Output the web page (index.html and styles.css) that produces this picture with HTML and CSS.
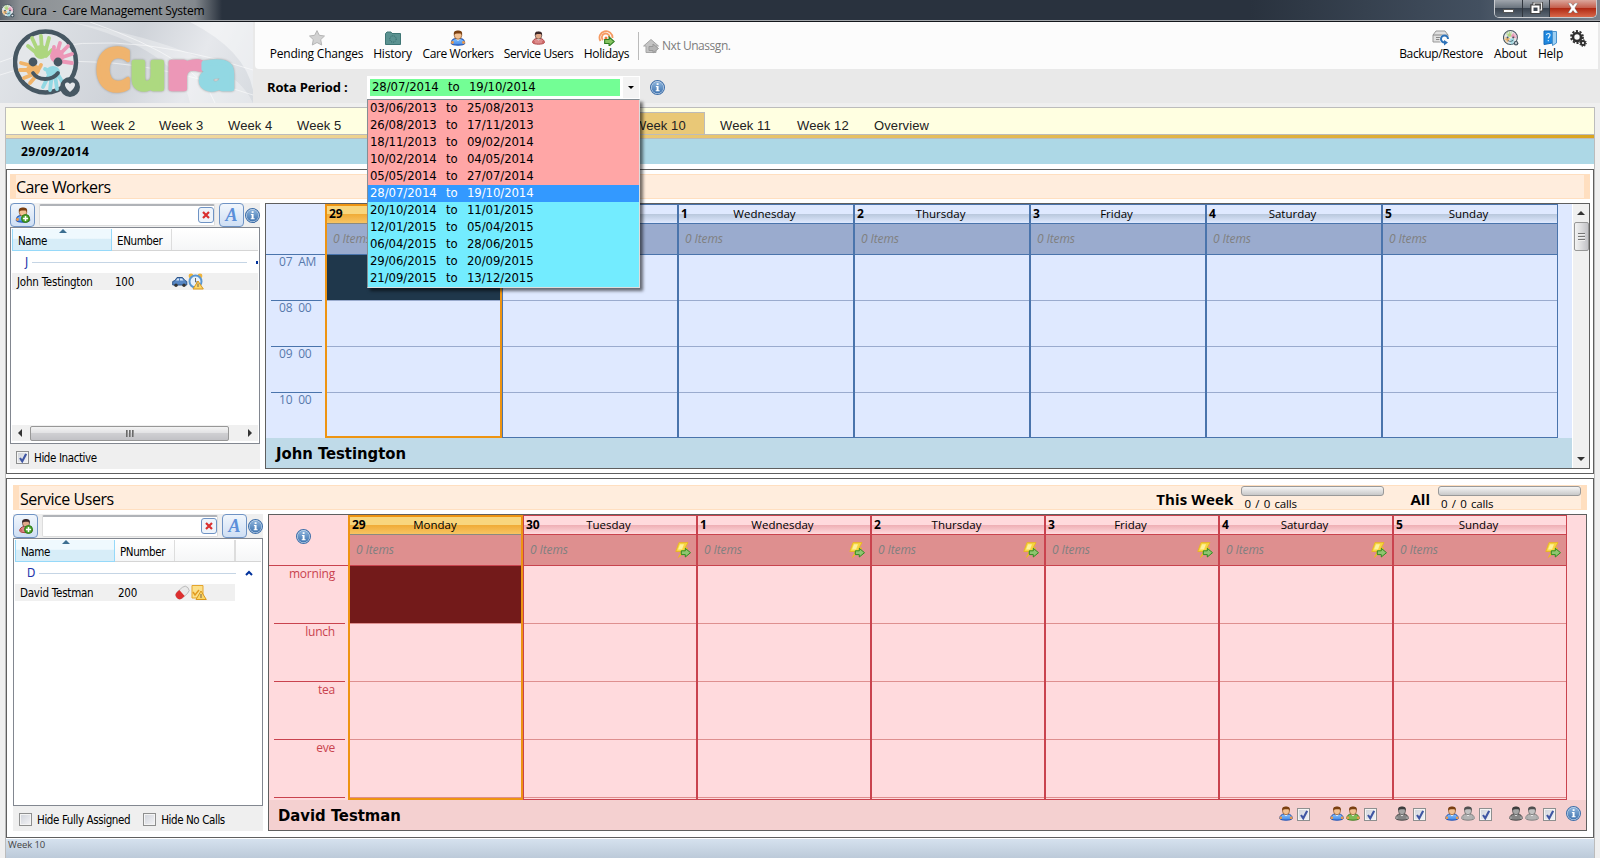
FILE: index.html
```html
<!DOCTYPE html>
<html lang="en">
<head>
<meta charset="utf-8">
<title>Cura - Care Management System</title>
<link rel="stylesheet" href="styles.css">
</head>
<body>
<svg width="0" height="0" class="defs">
<defs>
<linearGradient id="gInfo" x1="0" y1="0" x2="0" y2="1"><stop offset="0" stop-color="#8db4dc"/><stop offset="1" stop-color="#3f74b0"/></linearGradient>
<linearGradient id="gBlue" x1="0" y1="0" x2="0" y2="1"><stop offset="0" stop-color="#8cc4fa"/><stop offset="1" stop-color="#3f86e8"/></linearGradient>
<symbol id="info" viewBox="0 0 14 14"><circle cx="7" cy="7" r="6.500" fill="#dde9f5" stroke="#3e6ea8"/><circle cx="7" cy="7" r="5.500" fill="url(#gInfo)"/><rect x="6.200" y="3" width="1.800" height="1.600" fill="#fff"/><path d="M5.500 5.500H8V9.500H9V10.600H5.300V9.500H6.200V6.500H5.500Z" fill="#fff"/></symbol>
<symbol id="man" viewBox="0 0 14 15"><path d="M.7 12.600C.6 9.600 3 8.200 5 8H9c2 .2 4.400 1.600 4.300 4.600C12 14.700 2 14.700.7 12.600Z" fill="var(--body)" stroke="var(--edge)"/><circle cx="1.800" cy="11.800" r="1.400" fill="var(--hand)"/><circle cx="12.200" cy="11.800" r="1.400" fill="var(--hand)"/><path d="M5 8.200H9L7 10.200Z" fill="#fff"/><ellipse cx="7" cy="5" rx="3.500" ry="3.700" fill="var(--skin)" stroke="var(--hair)" stroke-width=".6"/><path d="M3.200 5C2.500 1 4.600.4 7 .4S11.500 1 10.800 5L9.800 3.200H6L3.800 3.800Z" fill="var(--hair)"/></symbol>
<symbol id="plus" viewBox="0 0 9 9"><circle cx="4.500" cy="4.500" r="4" fill="#4fa52e" stroke="#2c7a17"/><path d="M4.500 2V7M2 4.500H7" stroke="#fff" stroke-width="1.500"/></symbol>
<symbol id="arrow" viewBox="0 0 10 10"><path d="M.6 3.200H4.600V.8L9.300 5 4.600 9.200V6.800H.6Z" fill="#86c463" stroke="#2e7d21"/></symbol>
<symbol id="bolt" viewBox="0 0 16 16"><path d="M4 .6H13L10 6H13L3.500 15.400 6.500 9.500H.8Z" fill="#f7d640" stroke="#e8b624" stroke-width=".9"/><path d="M5 2.300H9L7 7.500H3Z" fill="#fdf19a"/><path d="M6.300 8.800H10.300V6.300L15.500 10.700 10.300 15V12.600H6.300Z" fill="#8fc56f" stroke="#2e8d21"/></symbol>
<symbol id="chk" viewBox="0 0 7 9"><path d="M.8 4.500L2.800 7.500 6.300.8" fill="none" stroke="#3f56a3" stroke-width="1.900"/></symbol>
<symbol id="face" viewBox="0 0 70 70">
<circle cx="32.500" cy="33" r="30.500" fill="#e4e7ea" stroke="#465762" stroke-width="4.500"/>
<g stroke-linecap="round" stroke-width="3.800" fill="none">
<path stroke="#add67f" d="M26 26L15 17M26 24L19 9M29 23L28 7M32 24L36 9M33 27L39 21"/><ellipse cx="28" cy="23" rx="7" ry="7" fill="#add67f"/>
<path stroke="#ec97b7" d="M43 27L47 14M46 26L55 17M47 29L59 25M46 32L59 34M40 27L41 18"/><ellipse cx="44" cy="27" rx="7" ry="7" fill="#ec97b7"/>
<path stroke="#f0b46a" d="M20 37L8 34M20 41L7 41M21 45L11 49M23 47L17 54M24 43L28 36"/><ellipse cx="20" cy="41" rx="7" ry="6" fill="#f0b46a"/>
<path stroke="#92d8e3" d="M37 44L30 58M39 45L37 61M42 46L44 60M44 44L51 56M36 42L32 40"/><ellipse cx="40" cy="43" rx="7" ry="6" fill="#92d8e3"/></g>
<circle cx="20" cy="33" r="4.400" fill="#465762"/><circle cx="45" cy="33" r="4.400" fill="#465762"/>
<path d="M20 44C25 52 39 52 45 44" stroke="#465762" stroke-width="3.800" fill="none" stroke-linecap="round"/>
<circle cx="57" cy="58" r="10" fill="#465762"/><path d="M57 63C48 56 53 51 57 55 61 51 66 56 57 63Z" fill="#e4e7ea"/></symbol>
</defs></svg>

<div class="titlebar"><svg class="ticon"><use href="#face"/></svg><span class="ttext">Cura&nbsp; -&nbsp; Care Management System</span>
<div class="winbtns"><i class="wb min"><b></b></i><i class="wb max"><svg width="13" height="12" viewBox="0 0 13 12"><path d="M4 3V1H11.500V8H9.500" fill="none" stroke="#444" stroke-width="3"/><path d="M2 4H9V10.500H2Z" fill="none" stroke="#444" stroke-width="3.500"/><path d="M4 3V1H11.500V8H9.500" fill="none" stroke="#eee" stroke-width="1.200"/><path d="M2.500 4.500H8.500V10H2.500Z" fill="none" stroke="#fff" stroke-width="2"/></svg></i><i class="wb close"><svg width="12" height="10" viewBox="0 0 12 10"><path d="M1 0H4L6 2.500 8 0H11L7.800 5 11 10H8L6 7.500 4 10H1L4.200 5Z" fill="#fff" stroke="#555" stroke-width=".4"/></svg></i></div></div>

<header class="head">
<div class="brand"><svg width="253" height="81" viewBox="0 22 253 81">
<path d="M70 22Q230 50 253 103H190Q180 50 70 22Z" fill="#fff" opacity=".3"/><path d="M190 22Q245 50 253 90V22Z" fill="#fff" opacity=".45"/><path d="M0 62Q100 20 253 70M0 75Q90 40 253 95M90 22Q200 60 215 103" stroke="#fff" fill="none" opacity=".55"/>
<use href="#face" x="13" y="29" width="70" height="70"/>
<g class="word"><text x="96" y="88.500" font-size="55" textLength="35" lengthAdjust="spacingAndGlyphs" fill="#f0b46e" stroke="#f0b46e">C</text><text x="130" y="88.500" font-size="49" textLength="36" lengthAdjust="spacingAndGlyphs" fill="#add980" stroke="#add980">u</text><text x="166" y="88.500" font-size="49" textLength="34" lengthAdjust="spacingAndGlyphs" fill="#ec97b7" stroke="#ec97b7">r</text><text x="199" y="88.500" font-size="49" textLength="37" lengthAdjust="spacingAndGlyphs" fill="#92d8e3" stroke="#92d8e3">a</text></g></svg></div>
<div class="headmain">
<nav class="tools">
<a class="tool t1"><svg width="16" height="16"><path d="M8 .6L10.300 5.300 15.500 6 11.700 9.600 12.700 15 8 12.500 3.300 15 4.300 9.600.5 6 5.700 5.300Z" fill="#d2d2d2" stroke="#b5b5b5"/></svg><span>Pending Changes</span></a>
<a class="tool t2"><svg width="16" height="16"><path d="M.5 3.500L2 2H6L7 3.500H15.500V14.500H.5Z" fill="#5b9291" stroke="#3f7675"/><circle cx="8" cy="9" r="3.200" fill="none" stroke="#2f6667" stroke-dasharray="1 1"/></svg><span>History</span></a>
<a class="tool t3"><svg width="16" height="16" class="blue"><use href="#man"/></svg><span>Care Workers</span></a>
<a class="tool t4"><svg width="13" height="15" class="red"><use href="#man"/></svg><span>Service Users</span></a>
<a class="tool t5"><svg width="18" height="17"><path d="M2.500 11A6.500 6.500 0 1 1 14.500 8M5 10A3.800 3.800 0 1 1 11.500 7" fill="none" stroke="#f59a62" stroke-width="1.800"/><circle cx="8" cy="8" r="1.500" fill="#ef7d3c"/><use href="#arrow" x="6" y="6" width="11" height="11"/></svg><span>Holidays</span></a>
<i class="sep"></i>
<a class="nxt"><svg width="17" height="16"><path d="M.6 8L8 1.500 15.500 8H13V14.500H3V8Z" fill="#c4c4c4" stroke="#a5a5a5"/><path d="M6 8.500H10V6L15.500 10.500 10 15V12.500H6Z" fill="#b4b4b4" stroke="#999"/></svg><span>Nxt Unassgn.</span></a>
<a class="tool t6"><svg width="18" height="16"><path d="M1 5L4 1H13L16 5V12H1Z" fill="#e0e0e0" stroke="#999"/><path d="M1 5H16M4 7.500H10M4 9.500H9" stroke="#888" fill="none"/><circle cx="12.500" cy="9.500" r="5" fill="#fcfcfc"/><path d="M16 9A3.500 3.500 0 1 0 12.500 12.500" stroke="#2e72b8" stroke-width="2" fill="none"/><path d="M12 10V15.500L16 12.500Z" fill="#2e72b8"/></svg><span>Backup/Restore</span></a>
<a class="tool t7"><svg width="16" height="16"><use href="#face"/></svg><span>About</span></a>
<a class="tool t8"><svg width="15" height="16"><path d="M1 1H9.500V13L1 14.500Z" fill="#2089e0" stroke="#1268b8"/><path d="M9.500 1.500H13.500V13L9.500 15.500Z" fill="#9fd0f3" stroke="#4c94cc"/><path d="M3.500 5C3.500 3 7.300 3 7 5.200 6.800 6.800 5.300 6.800 5.300 8.500M5.300 10V11.200" fill="none" stroke="#d9f0ff" stroke-width="1.200"/></svg><span>Help</span></a>
<a class="gear"><svg width="17" height="17" fill="none" stroke="#303030"><circle cx="7" cy="7" r="4" stroke-width="2.600"/><circle cx="7" cy="7" r="6" stroke-width="1.800" stroke-dasharray="2.200 1.570"/><circle cx="13" cy="13" r="2" stroke-width="1.800"/><circle cx="13" cy="13" r="3.200" stroke-width="1.200" stroke-dasharray="1.200 1.300"/></svg></a>
</nav>
<div class="rota"><b>Rota Period :</b>
<div class="combo"><div class="field">28/07/2014 &nbsp; to &nbsp; 19/10/2014</div><i class="caret"></i>
<ul class="drop"><li class="r">03/06/2013 &nbsp; to &nbsp; 25/08/2013</li><li class="r">26/08/2013 &nbsp; to &nbsp; 17/11/2013</li><li class="r">18/11/2013 &nbsp; to &nbsp; 09/02/2014</li><li class="r">10/02/2014 &nbsp; to &nbsp; 04/05/2014</li><li class="r">05/05/2014 &nbsp; to &nbsp; 27/07/2014</li><li class="s">28/07/2014 &nbsp; to &nbsp; 19/10/2014</li><li>20/10/2014 &nbsp; to &nbsp; 11/01/2015</li><li>12/01/2015 &nbsp; to &nbsp; 05/04/2015</li><li>06/04/2015 &nbsp; to &nbsp; 28/06/2015</li><li>29/06/2015 &nbsp; to &nbsp; 20/09/2015</li><li>21/09/2015 &nbsp; to &nbsp; 13/12/2015</li></ul></div>
<svg class="info"><use href="#info"/></svg></div>
</div>
</header>

<main class="frame">
<nav class="tabs"><a>Week 1</a><a>Week 2</a><a>Week 3</a><a>Week 4</a><a>Week 5</a><a class="gap"></a><a class="on">Week 10</a><a class="w">Week 11</a><a class="w">Week 12</a><a class="w">Overview</a></nav>
<div class="gold"></div>
<div class="date">29/09/2014</div>

<section class="panel care">
<h2 class="ptitle"><span>Care Workers</span></h2>
<div class="cols">
<aside class="side">
<div class="sbar"><button class="btn"><svg width="16" height="16" class="blue"><use href="#man"/></svg><svg class="pl"><use href="#plus"/></svg></button><div class="search"><button class="clr"><svg width="8" height="8"><path d="M1 1L7 7M7 1L1 7" stroke="#d93030" stroke-width="2.200"/></svg></button></div><button class="btn a">A</button><svg class="info"><use href="#info"/></svg></div>
<div class="list">
<div class="lh"><span class="n">Name<i></i></span><span class="e">ENumber</span><span class="z"></span></div>
<div class="grp"><span>J</span><hr><i class="dot"></i></div>
<div class="row"><span class="c1">John Testington</span><span class="c2">100</span><svg width="32" height="17"><path d="M.7 8.500L3 7.500 5 4.500H10.500L13 7.500 14.800 8.500V12H.7Z" fill="#5686c4" stroke="#2d5488"/><path d="M4 7.500L5.500 5.500H7V7.500ZM8 5.500H10L11.500 7.500H8Z" fill="#d5e6f7"/><circle cx="4" cy="12.300" r="1.700" fill="#333"/><circle cx="12" cy="12.300" r="1.700" fill="#333"/><circle cx="19" cy="3" r="2.400" fill="#f0b43c"/><circle cx="28" cy="3" r="2.400" fill="#f0b43c"/><circle cx="23.500" cy="8.500" r="6" fill="#e6f1fb" stroke="#5a96d0" stroke-width="2"/><path d="M23.500 5V9H26" stroke="#666" fill="none"/><path d="M26 8L31.300 16H21Z" fill="#fbd667" stroke="#d9971c"/><path d="M26 10.500V14" stroke="#765"/></svg></div>
<div class="hs"><i class="la"></i><div class="thumb"><i></i><i></i><i></i></div><i class="ra"></i></div>
</div>
<div class="opts"><label><span class="cb"><svg width="8" height="10"><use href="#chk"/></svg></span>Hide Inactive</label></div>
</aside>
<div class="cal">
<div class="calbody">
<div class="times"><div class="t0"></div><div class="tm">07&nbsp; AM</div><div class="tm">08&nbsp; 00</div><div class="tm">09&nbsp; 00</div><div class="tm">10&nbsp; 00</div></div>
<div class="day today"><div class="dh"><b>29</b></div><div class="it">0 Items</div><div class="sl dark"></div><div class="sl"></div><div class="sl"></div><div class="sl"></div></div>
<div class="day tue"><div class="dh"></div><div class="it"></div><div class="sl"></div><div class="sl"></div><div class="sl"></div><div class="sl"></div></div>
<div class="day"><div class="dh"><b>1</b><span>Wednesday</span></div><div class="it">0 Items</div><div class="sl"></div><div class="sl"></div><div class="sl"></div><div class="sl"></div></div>
<div class="day"><div class="dh"><b>2</b><span>Thursday</span></div><div class="it">0 Items</div><div class="sl"></div><div class="sl"></div><div class="sl"></div><div class="sl"></div></div>
<div class="day"><div class="dh"><b>3</b><span>Friday</span></div><div class="it">0 Items</div><div class="sl"></div><div class="sl"></div><div class="sl"></div><div class="sl"></div></div>
<div class="day"><div class="dh"><b>4</b><span>Saturday</span></div><div class="it">0 Items</div><div class="sl"></div><div class="sl"></div><div class="sl"></div><div class="sl"></div></div>
<div class="day last"><div class="dh"><b>5</b><span>Sunday</span></div><div class="it">0 Items</div><div class="sl"></div><div class="sl"></div><div class="sl"></div><div class="sl"></div></div>
</div>
<div class="foot"><span>John Testington</span></div>
<div class="vs"><i class="ua"></i><div class="vth"><i></i><i></i><i></i></div><i class="da"></i></div>
</div>
</div>
</section>

<section class="panel users">
<h2 class="ptitle"><span>Service Users</span><b class="tw">This Week</b><div class="prog"><i></i><em>0 / 0 calls</em></div><b class="al">All</b><div class="prog"><i></i><em>0 / 0 calls</em></div></h2>
<div class="cols">
<aside class="side">
<div class="sbar"><button class="btn"><svg width="14" height="16" class="red"><use href="#man"/></svg><svg class="pl"><use href="#plus"/></svg></button><div class="search"><button class="clr"><svg width="8" height="8"><path d="M1 1L7 7M7 1L1 7" stroke="#d93030" stroke-width="2.200"/></svg></button></div><button class="btn a">A</button><svg class="info"><use href="#info"/></svg></div>
<div class="list">
<div class="lh"><span class="n">Name<i></i></span><span class="e">PNumber</span><span class="z y"></span><span class="z"></span></div>
<div class="grp"><span>D</span><hr><svg width="8" height="6"><path d="M1 5L4 2 7 5" fill="none" stroke="#00319c" stroke-width="2"/></svg></div>
<div class="row"><span class="c1">David Testman</span><span class="c2">200</span><svg width="32" height="17"><g transform="rotate(-42 7 9)"><rect x="0" y="5" width="15" height="8" rx="4" fill="#e9e9e9" stroke="#aaa" stroke-width=".7"/><path d="M7 5H4A4 4 0 0 0 4 13H7Z" fill="#dc3030"/></g><path d="M17 1.500H28V14H17Z" fill="#fce08a" stroke="#e5a52c"/><path d="M18 8L20 11 24 6" fill="none" stroke="#e19a20" stroke-width="1.500"/><path d="M26 7L31.300 15.500H21Z" fill="#fbd667" stroke="#d9971c"/><path d="M26 10V14" stroke="#765"/></svg></div>
</div>
<div class="opts"><label><span class="cb"></span>Hide Fully Assigned</label><label class="l2"><span class="cb"></span>Hide No Calls</label></div>
</aside>
<div class="cal">
<div class="calbody">
<div class="times"><div class="t0"><svg class="info"><use href="#info"/></svg></div><div class="tm">morning</div><div class="tm">lunch</div><div class="tm">tea</div><div class="tm">eve</div></div>
<div class="day today"><div class="dh"><b>29</b><span>Monday</span></div><div class="it">0 Items</div><div class="sl dark"></div><div class="sl"></div><div class="sl"></div><div class="sl"></div></div>
<div class="day tue"><div class="dh"><b>30</b><span>Tuesday</span></div><div class="it">0 Items<svg><use href="#bolt"/></svg></div><div class="sl"></div><div class="sl"></div><div class="sl"></div><div class="sl"></div></div>
<div class="day"><div class="dh"><b>1</b><span>Wednesday</span></div><div class="it">0 Items<svg><use href="#bolt"/></svg></div><div class="sl"></div><div class="sl"></div><div class="sl"></div><div class="sl"></div></div>
<div class="day"><div class="dh"><b>2</b><span>Thursday</span></div><div class="it">0 Items<svg><use href="#bolt"/></svg></div><div class="sl"></div><div class="sl"></div><div class="sl"></div><div class="sl"></div></div>
<div class="day"><div class="dh"><b>3</b><span>Friday</span></div><div class="it">0 Items<svg><use href="#bolt"/></svg></div><div class="sl"></div><div class="sl"></div><div class="sl"></div><div class="sl"></div></div>
<div class="day"><div class="dh"><b>4</b><span>Saturday</span></div><div class="it">0 Items<svg><use href="#bolt"/></svg></div><div class="sl"></div><div class="sl"></div><div class="sl"></div><div class="sl"></div></div>
<div class="day last"><div class="dh"><b>5</b><span>Sunday</span></div><div class="it">0 Items<svg><use href="#bolt"/></svg></div><div class="sl"></div><div class="sl"></div><div class="sl"></div><div class="sl"></div></div>
</div>
<div class="foot"><span>David Testman</span>
<div class="keys">
<span class="k"><svg class="m blue"><use href="#man"/></svg><span class="cb"><svg width="8" height="10"><use href="#chk"/></svg></span></span>
<span class="k k2"><svg class="m blue"><use href="#man"/></svg><svg class="m green"><use href="#man"/></svg><span class="cb"><svg width="8" height="10"><use href="#chk"/></svg></span></span>
<span class="k k3"><svg class="m dgray"><use href="#man"/></svg><span class="cb"><svg width="8" height="10"><use href="#chk"/></svg></span></span>
<span class="k k4"><svg class="m blue"><use href="#man"/></svg><svg class="m lgray"><use href="#man"/></svg><span class="cb"><svg width="8" height="10"><use href="#chk"/></svg></span></span>
<span class="k k5"><svg class="m dgray"><use href="#man"/></svg><svg class="m lgray"><use href="#man"/></svg><span class="cb"><svg width="8" height="10"><use href="#chk"/></svg></span></span>
<svg class="info"><use href="#info"/></svg>
</div></div>
</div>
</div>
</section>
<footer class="status">Week 10</footer>
</main>
</body>
</html>
```
FILE: styles.css
```css
*{box-sizing:border-box}
body{margin:0;width:1600px;height:858px;overflow:hidden;background:#efefef;font:12px/16px "Open Sans","Noto Sans",sans-serif;color:#000;white-space:nowrap}
svg{display:block;flex:none}
i,em{font-style:normal}
.defs{position:absolute}
.blue{--body:url(#gBlue);--edge:#1d4fb0;--hand:#e8994d;--skin:#f2c193;--hair:#7a3f10}
.green{--body:#7fba55;--edge:#3c7a1c;--hand:#e8994d;--skin:#f2c193;--hair:#7a3f10}
.red{--body:#dd8a8a;--edge:#a63a3a;--hand:#c66;--skin:#e0a98a;--hair:#3a2626}
.dgray{--body:#858585;--edge:#484848;--hand:#999;--skin:#a5a5a5;--hair:#3c3c3c}
.lgray{--body:#b3b3b3;--edge:#808080;--hand:#aaa;--skin:#c2c2c2;--hair:#505050}
.info{width:15px;height:15px}

.titlebar{height:22px;display:flex;align-items:flex-start;background:linear-gradient(90deg,#5d646d 0,#8b9094 20px,#9b9fa2 110px,#83888d 195px,#29323e 222px,#29323e 1250px,#435060 1480px,#7a828c 1600px);border-bottom:1px solid #14171c;box-shadow:inset 0 -1px #a5a8ac}
.ticon{width:14px;height:14px;margin:4px 0 0 1px}
.ttext{margin:3px 0 0 6px;font-size:12px;letter-spacing:-.2px}
.winbtns{margin-left:auto;margin-right:3px;display:flex;height:18px;border:1px solid #c9ccd0;border-top:0;border-radius:0 0 5px 5px;overflow:hidden}
.wb{display:flex;align-items:center;justify-content:center;background:linear-gradient(#a0a6ad,#6c757f 45%,#39434f 50%,#5d6874);width:28px;border-right:1px solid #30363e}
.wb.max{width:27px;padding-bottom:2px}
.wb.close{width:46px;border:0;background:linear-gradient(#dba79c,#c5604e 45%,#b02a14 50%,#d8684a);padding-bottom:2px}
.min b{width:11px;height:4px;background:#fff;border:1px solid #555;margin-top:5px}

.head{height:81px;display:flex}
.brand{width:255px;background:linear-gradient(115deg,#e3e6ea,#cfd3d9 50%,#e6e8ec 75%,#d7dbe0);border-right:2px solid #e9e9e9}
.word{filter:drop-shadow(0 0 1px #999)}
.word text{font-family:"DejaVu Sans";font-weight:bold;stroke-width:4.500;stroke-linejoin:round}
.headmain{flex:1;background:#e9e9e9}
.tools{height:47px;background:#fcfcfc;display:flex;align-items:flex-start;padding-left:15px;margin-right:2px;border-radius:0 0 0 4px}
.tool{display:flex;flex-direction:column;align-items:center;padding-top:8px}
.tool svg{height:16px}
.tool span{line-height:16px;letter-spacing:-.2px}
.t1{width:93px}.t2{width:39px;margin-left:10px}.t3{width:70px;margin-left:11px}.t4{width:69px;margin-left:11px}.t5{width:47px;margin-left:10px}
.t3 span,.t4 span{letter-spacing:-.4px}
.t5 span{letter-spacing:-.3px}
.sep{width:1px;height:28px;background:#bbb;margin:10px 0 0 8px}
.nxt{display:flex;margin:16px 0 0 4px;gap:2px;color:#7c7c7c;letter-spacing:-.45px}
.nxt span{line-height:16px}
.t6{width:84px;margin-left:auto}.t7{width:33px;margin-left:11px}.t8{width:25px;margin-left:11px}
.t6 span{letter-spacing:-.35px}
.gear{margin:8px 11px 0 7px}
.rota{display:flex;height:34px;align-items:flex-start;padding-left:12px}
.rota>b{width:100px;font-size:13px;line-height:18px;margin-top:9px;letter-spacing:-.15px}
.combo{position:relative;width:273px;height:23px;background:#fff;margin-top:7px;padding:3px;display:flex;justify-content:space-between;font:13px/17px "DejaVu Sans Condensed","DejaVu Sans",sans-serif;letter-spacing:-.08px;word-spacing:-.5px}
.field{width:250px;background:#73fe95;padding-left:2px;height:17px;line-height:16px}
.caret{width:16px;height:21px;margin:-2px -2px 0 0;background:#f3f3f3;display:flex;align-items:center;justify-content:center}
.caret:before{content:"";border:3px solid transparent;border-top:3px solid #000;border-bottom:0}
.drop{position:absolute;z-index:5;left:0;top:23px;width:273px;margin:0;padding:0;list-style:none;border:1px solid #848e95;border-right-color:#ddd;border-bottom-color:#ddd;box-shadow:3px 3px 3px rgba(0,0,0,.55)}
.drop li{height:17px;line-height:16px;padding-left:2px;background:#73ecff}
.drop .r{background:#ffa6a6}
.drop .s{background:#3399ff;color:#fff}
.rota .info{margin:11px 0 0 10px}

.frame{margin:4px 5px 0;border:1px solid #bcbcbc;border-bottom:0;height:751px;background:#fff;display:flex;flex-direction:column;width:1590px}
.tabs{height:26px;background:#ffffe1;display:flex;align-items:flex-end;font:13px/20px "Liberation Sans";letter-spacing:.1px;color:#222}
.tabs a{width:69px;height:22px;padding-left:15px;line-height:27px}
.tabs a:nth-child(2){padding-left:16px}
.tabs a.gap{width:276px}
.tabs a.on{width:78px;height:22px;background:#e9c877;border:1px solid #bbb;border-bottom:0;padding-left:6px;line-height:26px}
.tabs a.w{width:77px;padding-left:15px}
.gold{height:5px;border:solid #bcbcbc;border-width:1px 0;background:linear-gradient(90deg,#f3dfad,#daa520)}
.date{height:25px;background:#add8e6;font-weight:bold;font-size:12px;line-height:25px;padding-left:15px;letter-spacing:.35px}
.panel{border:1px solid #5f5f5f;width:1588px;padding:4px 3px;display:flex;flex-direction:column}
.care{height:305px;margin-top:5px}
.users{height:360px;margin-top:4px;padding:6px}
.ptitle{margin:0;height:25px;background:#ffeddd;border:solid #ffdfc0;border-width:1px 6px;font-weight:normal;font-size:16px;line-height:25px;display:flex}
.ptitle>span{letter-spacing:-.55px}
.users .ptitle>span{letter-spacing:-.45px;line-height:27px;padding-left:1px}
.cols{display:flex;gap:5px;margin-top:4px;flex:1}
.side{width:250px;background:#efefef;display:flex;flex-direction:column}
.sbar{display:flex;height:24px}
.btn{position:relative;width:25px;height:24px;padding:0;border:1px solid #6f93c4;border-radius:4px;background:linear-gradient(#f1f6fc,#cfdff4);display:flex;align-items:center;justify-content:center}
.btn.a{font:italic bold 18px/20px "Liberation Serif";color:#5b8fd9}
.pl{position:absolute;right:4px;bottom:3px;width:9px;height:9px}
.search{width:176px;height:22px;margin:1px 4px 0 4px;background:#fff;border:1px solid #ddd;border-top:2px solid #b0b3b8;border-radius:2px;display:flex;justify-content:flex-end}
.clr{width:16px;height:16px;margin:1px 0 0;padding:0;border:1px solid #6f93c4;border-radius:3px;background:#eef4fb;display:flex;align-items:center;justify-content:center}
.sbar .info{margin:5px 0 0 1px}
.list{background:#fff;border:1px solid #828790;height:217px;padding:1px;display:flex;flex-direction:column;font-family:"DejaVu Sans Condensed";font-size:11.500px;letter-spacing:-.22px}
.users .list{height:268px}
.lh{display:flex;height:22px;border-bottom:1px solid #d5d5d5;line-height:25px;background:linear-gradient(#fff,#f5f6f7);letter-spacing:-.4px}
.lh .n{position:relative;width:100px;padding-left:5px;background:linear-gradient(#eff9fe 45%,#d7edf8 46%);border:1px solid #96d9f9;border-top:0;height:22px}
.lh .n i{position:absolute;left:46px;top:0;border:4px solid transparent;border-bottom-color:#3c6f91;border-top:0}
.lh .e{width:60px;padding-left:5px;border-right:1px solid #ddd}
.lh .y{width:61px;border-right:2px solid #ddd}
.grp{display:flex;height:22px;align-items:center;padding-left:13px;color:#2233aa;font-size:12px}
.grp span{width:7px}
.grp hr{width:215px;margin:0;border:0;border-top:1px solid #c5d5e5}
.grp .dot{width:2px;height:3px;background:#00319c;margin-left:9px}
.users .grp{padding-left:12px}
.users .grp span{width:12px}
.users .grp hr{width:197px}
.grp svg{margin-left:9px}
.row{display:flex;height:17px;background:#f0f0f0;line-height:19px;padding-left:5px}
.c1{width:98px}.c2{width:57px}
.users .row{width:220px}
.hs{margin-top:auto;margin-bottom:1px;height:16px;background:#f0f0f0;display:flex;align-items:center;padding:0 6px}
.thumb{width:199px;height:15px;margin-left:8px;border:1px solid #979797;border-radius:2px;background:linear-gradient(#f3f3f3,#e2e2e4 45%,#cfcfd2 50%,#c2c2c6);display:flex;align-items:center;justify-content:center;gap:1px}
.thumb i{width:2px;height:7px;background:linear-gradient(90deg,#555,#aaa)}
.la,.ra{border:4px solid transparent;border-left:0;border-right:4px solid #333}
.ra{border-right:0;border-left:4px solid #333;margin-left:auto}
.opts{flex:1;display:flex;padding:2px 0 0 6px;font-family:"DejaVu Sans Condensed";font-size:11.500px;letter-spacing:-.4px;align-items:center}
.opts label{display:flex;gap:5px;align-items:center}
.cb{width:13px;height:13px;border:1px solid #8e8f8f;background:linear-gradient(135deg,#cfd3da,#f4f4f6);box-shadow:inset 0 0 0 1px #f4f4f4;display:flex;align-items:center;justify-content:center}
.l2{margin-left:13px}

.cal{--c:#dfe9ff;--l:#4a74ac;--m:#9aabce;--h:#b8c7dc;--f:#bfdae8;--d:#1f374b;position:relative;width:1325px;border:1px solid #5f5f5f;background:var(--c)}
.users .cal{--c:#ffdadd;--l:#c9434e;--m:#de8f8f;--h:#eeaeb4;--f:#f4d0d0;--d:#731a1a;width:1319px}
.calbody{display:flex;height:234px}
.times{width:59px;color:#5879ac;line-height:14px;letter-spacing:-.2px}
.t0{height:51px;border-bottom:1px solid var(--l)}
.tm{height:46px;margin:0 3px 0 5px;padding-left:8px;border-bottom:1px solid var(--l)}
.care .tm:last-child{border:0;height:45px}
.day{width:176px;border-right:2px solid var(--l);display:flex;flex-direction:column;height:234px;border-bottom:1px solid var(--l);overflow:hidden}
.day.last{width:175px;border-right-width:1px}
.day.today{width:177px;border:2px solid #ee9412}
.day.tue{width:177px;border-left:1px solid var(--l)}
.dh{flex:none;height:20px;border-top:1px solid var(--l);border-bottom:1px solid var(--l);background:linear-gradient(var(--c) 48%,var(--h) 50%,var(--c));display:flex;line-height:18px;font-size:11.500px}
.today .dh{background:linear-gradient(#f8d67e 48%,#f0ac38 50%,#f7c463);border-top:0;height:18px;line-height:16px;border-bottom-color:#8a8a80}
.dh b{width:20px;padding-left:2px;font-size:12px}
.dh span{flex:1;text-align:center;padding-right:23px}
.today .dh span{padding-right:21px}
.it{flex:none;height:31px;background:var(--m);border-bottom:1px solid var(--l);color:#808080;font-style:italic;line-height:30px;padding-left:6px;display:flex;justify-content:space-between;letter-spacing:-.1px}
.it svg{width:16px;height:16px;margin:7px 5px 0 0}
.sl{flex:none;height:46px;border-bottom:1px solid var(--m)}
.care .sl:last-child{border:0}
.sl.dark{background:var(--d)}
.foot{height:30px;width:1307px;background:var(--f);font-weight:bold;font-size:16px;line-height:30px;padding-left:10px;display:flex}
.foot>span{font-family:"DejaVu Sans Condensed";font-size:16.500px;letter-spacing:0;line-height:32px}
.vs{position:absolute;right:0;top:0;width:17px;height:264px;background:#f0f0f0;border-left:1px solid #fff;display:flex;flex-direction:column;align-items:center}
.ua,.da{border:4px solid transparent;border-top:0;border-bottom-color:#333;margin-top:7px}
.da{border-bottom:0;border-top:4px solid #333;margin:auto 0 7px}
.vth{width:15px;height:29px;margin-top:7px;border:1px solid #979797;border-radius:2px;background:linear-gradient(90deg,#f3f3f3,#dcdcde 50%,#c2c2c6);display:flex;flex-direction:column;align-items:center;justify-content:center;gap:1px}
.vth i{width:7px;height:2px;background:#777;border-bottom:1px solid #eee}

.users .calbody,.users .day{height:285px}
.users .times{width:79px;color:#c9434e;line-height:16px}
.users .tm{height:58px;text-align:right;padding:0 10px 0 0}
.users .t0 .info{margin-left:27px}
.users .t0{padding-top:14px}
.users .day{width:174px}
.users .day.today,.users .day.tue{width:175px}
.users .day.last{width:173px}
.users .sl{height:58px}
.users .foot{width:1317px;padding-left:9px}
.ptitle b{font-size:15px}
.tw{margin-left:auto;line-height:26px;letter-spacing:.15px}
.prog{width:143px;margin-left:8px}
.prog i{display:block;height:10px;border:1px solid #999;border-radius:3px;background:linear-gradient(#f5f5f5,#c9c9c9)}
.prog em{display:block;font-size:11.500px;line-height:16px;height:13px;padding-left:3px;word-spacing:1.500px;letter-spacing:-.15px}
.al{margin-left:26px;line-height:26px}
.keys{margin-left:auto;display:flex;padding:6px 5px 0 0}
.k{display:flex;gap:2px}
.m{width:14px;height:15px}
.keys .cb{margin:2px 0 0 2px}
.k2{margin-left:20px}
.k3{margin-left:18px}
.k4{margin-left:19px}
.k5{margin-left:17px}
.keys .info{margin-left:10px}
.status{flex:1;margin-top:1px;background:linear-gradient(#d5e1ee,#bccad9);font-size:9.500px;line-height:11px;padding-left:2px;color:#444;letter-spacing:-.1px}
```
